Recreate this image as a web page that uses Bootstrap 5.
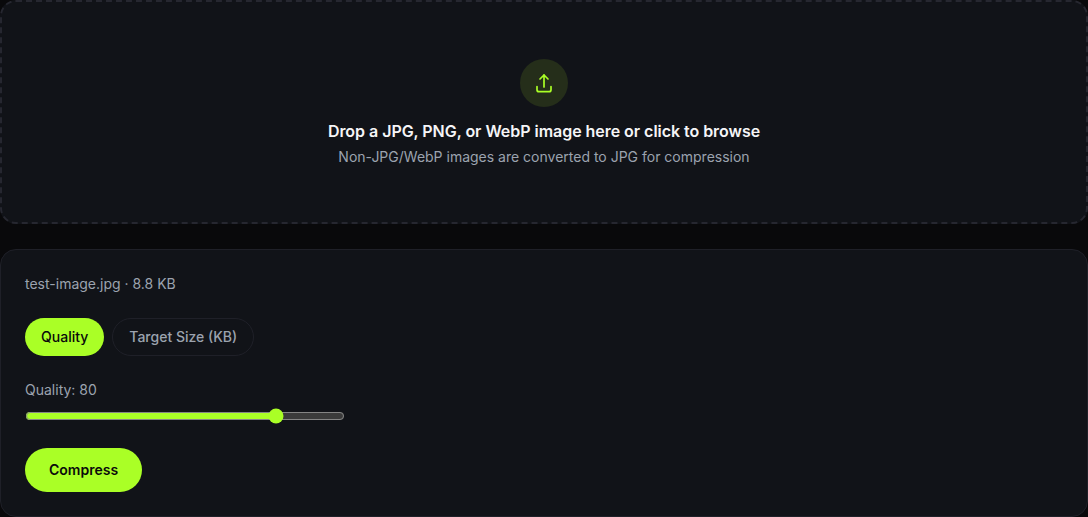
<!DOCTYPE html>
<html lang="en">

<head>
    <meta charset="UTF-8">
    <meta name="viewport" content="width=device-width, initial-scale=1.0">
    <title>Compress</title>
    <link href="https://cdn.jsdelivr.net/npm/bootstrap@5.3.3/dist/css/bootstrap.min.css" rel="stylesheet">
    <style>
        html, body {
            height: 100%;
        }

        body {
            background-color: #09090b;
            font-family: "Inter", "Liberation Sans", sans-serif;
            font-size: 14px;
            overflow: hidden;
        }

        .drop-area {
            height: 224px;
            background-color: #111318;
            border: 2px dashed #262730;
            border-radius: 16px;
            padding-top: 57px;
        }

        .upload-circle {
            width: 48px;
            height: 48px;
            background-color: #252e1a;
            color: #aaff26;
        }

        .drop-title {
            margin-top: 12px;
            font-size: 16px;
            line-height: 24px;
            font-weight: 600;
            letter-spacing: -0.04px;
            color: #f5f5f7;
        }

        .drop-hint {
            margin-top: 3px;
            line-height: 22px;
            color: #9ca3af;
        }

        .tool-panel {
            margin-top: 25px;
            height: 268px;
            background-color: #111318;
            border: 1px solid #1f2028;
            border-radius: 16px;
            padding: 24px;
        }

        .file-line {
            line-height: 20px;
            color: #9ca3af;
        }

        .mode-pill {
            height: 38px;
            padding: 0 16px;
            border-radius: 19px;
            font-size: 14px;
            font-weight: 500;
            line-height: 20px;
            --bs-btn-color: #9ca3af;
            --bs-btn-border-color: #1f2028;
            --bs-btn-hover-color: #9ca3af;
            --bs-btn-hover-border-color: #1f2028;
        }

        .mode-pill.is-on {
            border: 0;
            --bs-btn-color: #0a0a0b;
            --bs-btn-bg: #aaff26;
            --bs-btn-hover-color: #0a0a0b;
            --bs-btn-hover-bg: #aaff26;
        }

        .mode-row {
            margin-top: 24px;
            gap: 8px;
        }

        .quality-label {
            margin-top: 23px;
            line-height: 22px;
            color: #9ca3af;
        }

        .quality-range {
            display: block;
            width: 320px;
            margin: 7px 0 0;
            accent-color: #aaff26;
        }

        .compress-btn {
            margin-top: 24px;
            height: 44px;
            padding: 0 24px 2px;
            border: 0;
            border-radius: 22px;
            font-size: 14px;
            font-weight: 600;
            --bs-btn-color: #0a0a0b;
            --bs-btn-bg: #aaff26;
            --bs-btn-hover-color: #0a0a0b;
            --bs-btn-hover-bg: #aaff26;
        }
    </style>
</head>

<body>
    <div class="drop-area text-center">
        <div class="upload-circle rounded-circle d-flex align-items-center justify-content-center mx-auto">
            <svg width="24" height="24" viewBox="0 0 24 24" fill="none" stroke="currentColor" stroke-width="1.7"
                stroke-linecap="round" stroke-linejoin="round">
                <path d="M5 15.5v3.2a2 2 0 0 0 2 2h10a2 2 0 0 0 2-2v-3.2" />
                <path d="M8 8l4-4 4 4" />
                <path d="M12 4v12" />
            </svg>
        </div>
        <div class="drop-title">Drop a JPG, PNG, or WebP image here or click to browse</div>
        <div class="drop-hint">Non-JPG/WebP images are converted to JPG for compression</div>
    </div>

    <div class="tool-panel">
        <div class="file-line">test-image.jpg · 8.8 KB</div>
        <div class="mode-row d-flex">
            <button class="btn mode-pill is-on">Quality</button>
            <button class="btn mode-pill">Target Size (KB)</button>
        </div>
        <div class="quality-label">Quality: 80</div>
        <input type="range" class="quality-range" min="1" max="100" value="80">
        <button class="btn compress-btn">Compress</button>
    </div>

    <script src="https://cdn.jsdelivr.net/npm/bootstrap@5.3.3/dist/js/bootstrap.bundle.min.js"></script>
</body>

</html>
